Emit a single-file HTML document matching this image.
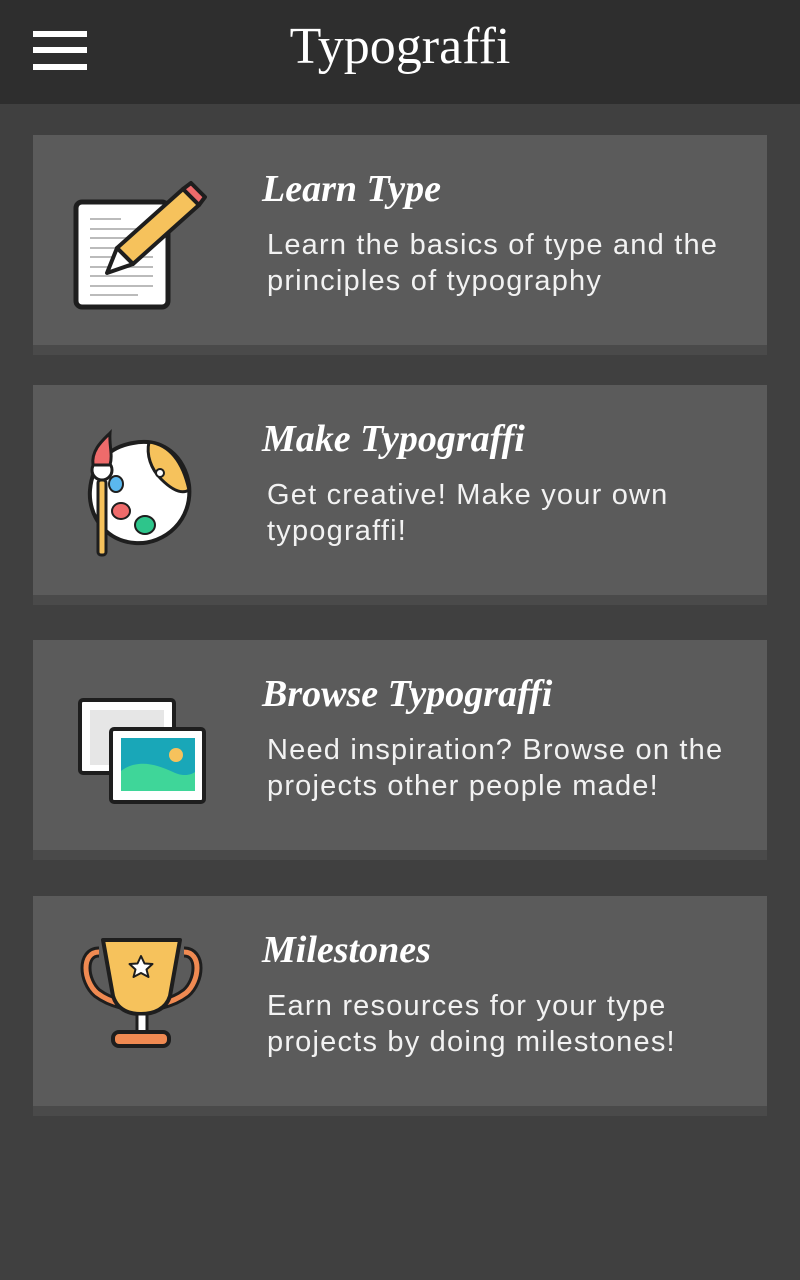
<!DOCTYPE html>
<html><head><meta charset="utf-8"><style>
*{margin:0;padding:0;box-sizing:border-box}
body{width:800px;height:1280px;background:#404040;position:relative;overflow:hidden;font-family:"Liberation Sans",sans-serif}
.hdr{position:absolute;left:0;top:0;width:800px;height:104px;background:#2e2e2e}
.bar{position:absolute;left:33px;width:54px;height:6px;background:#fff}
.ttl{position:absolute;left:0;width:800px;top:16px;text-align:center;color:#fff;font-family:"Liberation Serif",serif;font-size:52px;line-height:62px}
.card{position:absolute;left:33px;width:734px;height:220px;background:#4a4a4a}
.card .in{position:absolute;left:0;top:0;width:734px;height:210px;background:#5b5b5b}
.card h2{position:absolute;left:229px;top:32px;color:#fff;font-family:"Liberation Serif",serif;font-style:italic;font-weight:bold;font-size:38px;line-height:44px;white-space:nowrap}
.card p{position:absolute;left:234px;top:92px;color:#f2f2f2;font-size:29px;line-height:36px;letter-spacing:1.2px;white-space:nowrap}
.card svg{position:absolute;left:0;top:0}
</style></head><body>
<div class="hdr">
<div class="bar" style="top:31px"></div><div class="bar" style="top:47px"></div><div class="bar" style="top:64px"></div>
<div class="ttl">Typograffi</div>
</div>

<div class="card" style="top:135px"><div class="in">
<svg width="200" height="210">
<rect x="43" y="67" width="92" height="105" rx="6" fill="#fff" stroke="#1e1e1e" stroke-width="5"/>
<g stroke="#bbb" stroke-width="2"><line x1="57" y1="84" x2="88" y2="84"/><line x1="57" y1="94" x2="120" y2="94"/><line x1="57" y1="103" x2="120" y2="103"/><line x1="57" y1="113" x2="120" y2="113"/><line x1="57" y1="122" x2="120" y2="122"/><line x1="57" y1="132" x2="120" y2="132"/><line x1="57" y1="141" x2="120" y2="141"/><line x1="57" y1="151" x2="120" y2="151"/><line x1="57" y1="160" x2="105" y2="160"/></g>
<path d="M150 54 L166 70 L100 129 L84 113 Z" fill="#f6c25c" stroke="#1e1e1e" stroke-width="4" stroke-linejoin="round"/>
<path d="M150 54 L158 48 L172 62 L166 70 Z" fill="#ef6b6b" stroke="#1e1e1e" stroke-width="4" stroke-linejoin="round"/>
<path d="M84 113 L100 129 L74 138 Z" fill="#fff" stroke="#1e1e1e" stroke-width="4" stroke-linejoin="round"/>
</svg>
<h2>Learn Type</h2><p>Learn the basics of type and the<br>principles of typography</p></div></div>

<div class="card" style="top:385px"><div class="in">
<svg width="200" height="210">
<path d="M100 58 C130 52 152 72 156 100 C160 135 132 160 102 158 C72 156 55 130 57 105 C59 80 75 62 100 58 Z" fill="#fff" stroke="#1e1e1e" stroke-width="4"/>
<path d="M116 57 C138 60 150 78 156 105 C148 110 138 104 128 94 C118 84 113 70 116 57 Z" fill="#f6c25c" stroke="#1e1e1e" stroke-width="3"/>
<circle cx="127" cy="88" r="4" fill="#fff" stroke="#1e1e1e" stroke-width="2"/>
<ellipse cx="83" cy="99" rx="7" ry="8" fill="#5bb8ee" stroke="#1e1e1e" stroke-width="2"/>
<ellipse cx="88" cy="126" rx="9" ry="8" fill="#ef6b6b" stroke="#1e1e1e" stroke-width="2"/>
<ellipse cx="112" cy="140" rx="10" ry="9" fill="#2ec58b" stroke="#1e1e1e" stroke-width="2"/>
<rect x="65" y="95" width="8" height="75" rx="3" fill="#f6c25c" stroke="#1e1e1e" stroke-width="3"/>
<circle cx="69" cy="85" r="10" fill="#fff" stroke="#1e1e1e" stroke-width="3"/>
<path d="M60 80 C58 65 70 55 77 48 C76 60 80 70 77 80 Z" fill="#ef6b6b" stroke="#1e1e1e" stroke-width="3"/>
</svg>
<h2>Make Typograffi</h2><p>Get creative! Make your own<br>typograffi!</p></div></div>

<div class="card" style="top:640px"><div class="in">
<svg width="200" height="210">
<rect x="47" y="60" width="94" height="73" rx="3" fill="#fff" stroke="#1e1e1e" stroke-width="4"/>
<rect x="57" y="70" width="74" height="55" fill="#e6e6e6"/>
<rect x="78" y="89" width="93" height="73" rx="3" fill="#fff" stroke="#1e1e1e" stroke-width="4"/>
<rect x="88" y="98" width="74" height="53" fill="#19a7b8"/>
<path d="M88 131 C105 118 125 125 140 132 C150 137 158 135 162 132 L162 151 L88 151 Z" fill="#3fd699"/>
<circle cx="143" cy="115" r="7" fill="#f6c25c"/>
</svg>
<h2>Browse Typograffi</h2><p>Need inspiration? Browse on the<br>projects other people made!</p></div></div>

<div class="card" style="top:896px"><div class="in">
<svg width="200" height="210">
<path d="M66 56 C48 56 50 85 64 97 C72 103 80 106 88 108" fill="none" stroke="#1e1e1e" stroke-width="11"/>
<path d="M66 56 C48 56 50 85 64 97 C72 103 80 106 88 108" fill="none" stroke="#f08a52" stroke-width="5"/>
<path d="M151 56 C169 56 167 85 153 97 C145 103 137 106 129 108" fill="none" stroke="#1e1e1e" stroke-width="11"/>
<path d="M151 56 C169 56 167 85 153 97 C145 103 137 106 129 108" fill="none" stroke="#f08a52" stroke-width="5"/>
<path d="M70 44 L147 44 L137 100 C133 113 121 118 108 118 C95 118 84 113 80 100 Z" fill="#f6c25c" stroke="#1e1e1e" stroke-width="4" stroke-linejoin="round"/>
<rect x="104" y="118" width="10" height="18" fill="#fff" stroke="#1e1e1e" stroke-width="3"/>
<rect x="80" y="136" width="56" height="14" rx="6" fill="#f08a52" stroke="#1e1e1e" stroke-width="4"/>
<path d="M108 60 L111.5 67.5 L119.5 68 L113.5 73.5 L115.5 81 L108 77 L100.5 81 L102.5 73.5 L96.5 68 L104.5 67.5 Z" fill="#fff" stroke="#1e1e1e" stroke-width="2" stroke-linejoin="round"/>
</svg>
<h2>Milestones</h2><p>Earn resources for your type<br>projects by doing milestones!</p></div></div>
</body></html>
